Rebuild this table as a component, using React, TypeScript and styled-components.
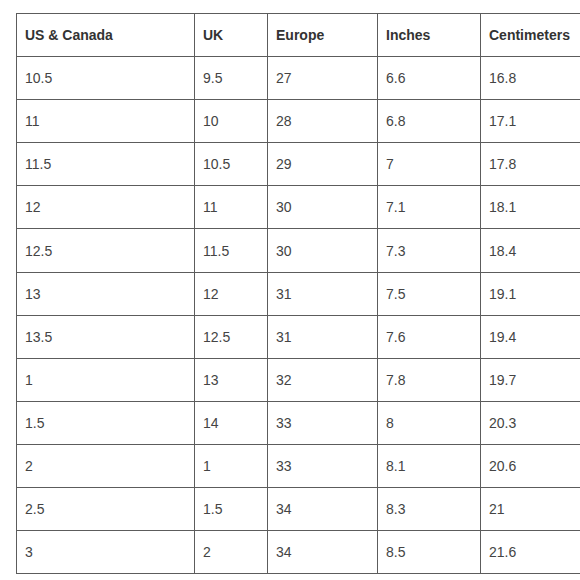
import React from "react";
import styled, { createGlobalStyle } from "styled-components";

const Global = createGlobalStyle`
  html, body { margin: 0; padding: 0; background: #fff; overflow: hidden; }
  body { font-family: "Liberation Sans", Arial, sans-serif; }
`;

const Page = styled.div`
  box-sizing: border-box;
  width: 580px;
  height: 580px;
  overflow: hidden;
  padding: 13px 0 0 16px;
`;

const Table = styled.table`
  border-collapse: collapse;
  table-layout: fixed;
  width: 640px;
  font-size: 14px;
`;

const Col = styled.col<{ $w: number }>`
  width: ${(p) => p.$w}px;
`;

const Row = styled.tr`
  height: 43.1px;
`;

const Th = styled.th`
  border: 1px solid #5c5c5c;
  padding: 0 8px;
  text-align: left;
  font-weight: bold;
  color: #333;
  vertical-align: middle;
`;

const Td = styled.td`
  border: 1px solid #5c5c5c;
  padding: 0 8px;
  color: #444;
  vertical-align: middle;
`;

const headers = ["US & Canada", "UK", "Europe", "Inches", "Centimeters"];
const widths = [178, 73, 110, 103, 176];
const rows = [
  ["10.5", "9.5", "27", "6.6", "16.8"],
  ["11", "10", "28", "6.8", "17.1"],
  ["11.5", "10.5", "29", "7", "17.8"],
  ["12", "11", "30", "7.1", "18.1"],
  ["12.5", "11.5", "30", "7.3", "18.4"],
  ["13", "12", "31", "7.5", "19.1"],
  ["13.5", "12.5", "31", "7.6", "19.4"],
  ["1", "13", "32", "7.8", "19.7"],
  ["1.5", "14", "33", "8", "20.3"],
  ["2", "1", "33", "8.1", "20.6"],
  ["2.5", "1.5", "34", "8.3", "21"],
  ["3", "2", "34", "8.5", "21.6"],
];

export default function App() {
  return (
    <Page>
      <Global />
      <Table>
        <colgroup>
          {widths.map((w, i) => (
            <Col key={i} $w={w} />
          ))}
        </colgroup>
        <thead>
          <Row>
            {headers.map((h) => (
              <Th key={h}>{h}</Th>
            ))}
          </Row>
        </thead>
        <tbody>
          {rows.map((r, i) => (
            <Row key={i}>
              {r.map((c, j) => (
                <Td key={j}>{c}</Td>
              ))}
            </Row>
          ))}
        </tbody>
      </Table>
    </Page>
  );
}
